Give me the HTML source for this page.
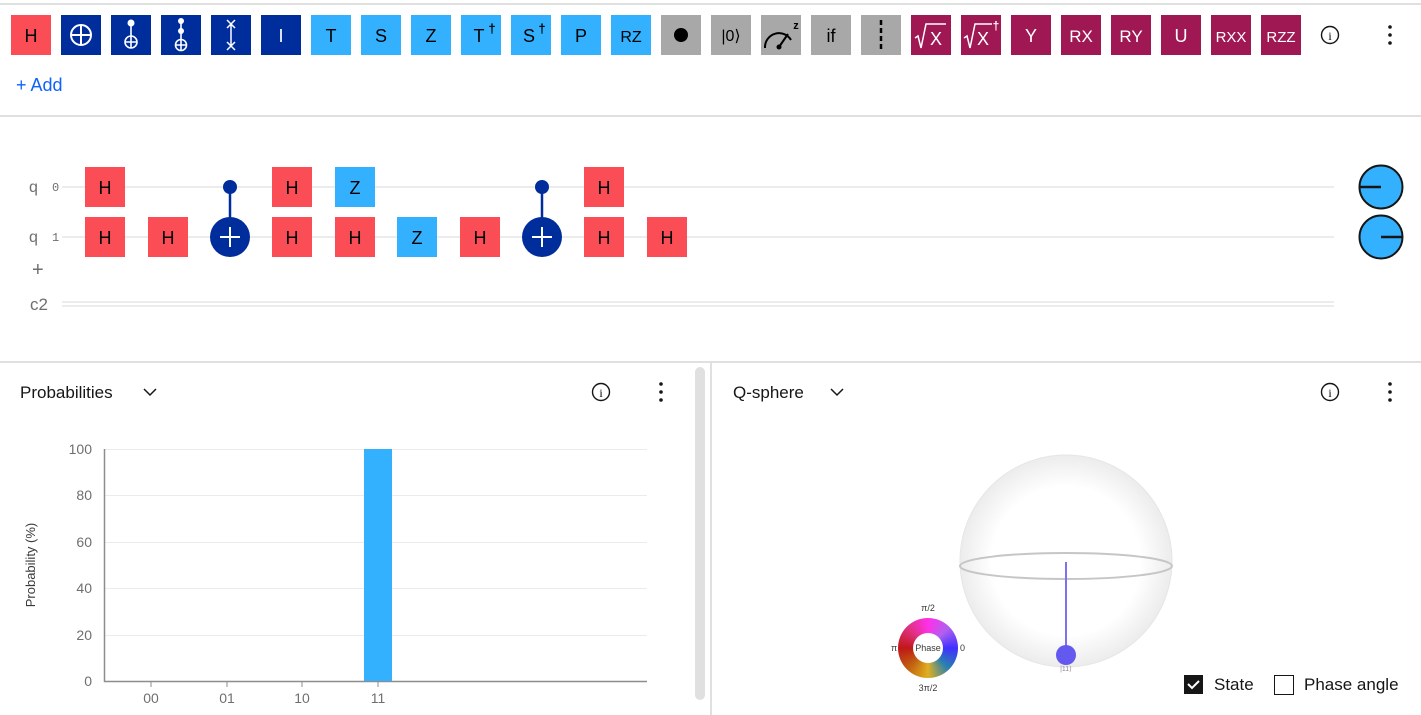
<!DOCTYPE html>
<html><head><meta charset="utf-8"><style>
html,body{margin:0;padding:0;background:#fff;width:1421px;height:715px;overflow:hidden;position:relative}
svg{display:block;font-family:"Liberation Sans",sans-serif}
.wheel{position:absolute;left:898px;top:618px;width:60px;height:60px;border-radius:50%;
background:conic-gradient(#ff30e8 0deg,#b060f0 45deg,#4030ff 90deg,#2a80b0 135deg,#e0b020 180deg,#c06010 225deg,#c01818 270deg,#e03080 315deg,#ff30e8 360deg)}
.wheel:after{content:"";position:absolute;left:15px;top:15px;width:30px;height:30px;border-radius:50%;background:#fff}
.wl{position:absolute;font-family:"Liberation Sans",sans-serif;font-size:9px;color:#393939}
</style></head><body>
<svg width="1421" height="715" viewBox="0 0 1421 715" xmlns="http://www.w3.org/2000/svg">
<rect x="0" y="3" width="1421" height="2" fill="#e0e0e0"/>
<g font-size="18" text-anchor="middle">
<rect x="11" y="15" width="40" height="40" fill="#fa4d56"/><text x="31" y="42" fill="#000">H</text>
<rect x="61" y="15" width="40" height="40" fill="#002d9c"/>
<g stroke="#fff" stroke-width="2" fill="none"><circle cx="81" cy="35" r="10"/><path d="M71 35h20M81 25v20"/></g>
<rect x="111" y="15" width="40" height="40" fill="#002d9c"/>
<g stroke="#fff" stroke-width="1.6" fill="none"><circle cx="131" cy="42" r="6"/><path d="M125 42h12M131 36v12M131 24v12"/></g><circle cx="131" cy="23" r="3.5" fill="#fff"/>
<rect x="161" y="15" width="40" height="40" fill="#002d9c"/>
<g stroke="#fff" stroke-width="1.6" fill="none"><circle cx="181" cy="45" r="5.5"/><path d="M175.5 45h11M181 39.5v11M181 21v18"/></g><circle cx="181" cy="21" r="3" fill="#fff"/><circle cx="181" cy="31" r="3" fill="#fff"/>
<rect x="211" y="15" width="40" height="40" fill="#002d9c"/>
<g stroke="#fff" stroke-width="1.5"><path d="M227 20l8 8M235 20l-8 8M227 42l8 8M235 42l-8 8M231 24v22"/></g>
<rect x="261" y="15" width="40" height="40" fill="#002d9c"/><text x="281" y="42" fill="#fff">I</text>
<rect x="311" y="15" width="40" height="40" fill="#33b1ff"/><text x="331" y="42">T</text>
<rect x="361" y="15" width="40" height="40" fill="#33b1ff"/><text x="381" y="42">S</text>
<rect x="411" y="15" width="40" height="40" fill="#33b1ff"/><text x="431" y="42">Z</text>
<rect x="461" y="15" width="40" height="40" fill="#33b1ff"/><text x="479" y="42">T</text><text x="492" y="33" font-size="13" font-weight="bold">†</text>
<rect x="511" y="15" width="40" height="40" fill="#33b1ff"/><text x="529" y="42">S</text><text x="542" y="33" font-size="13" font-weight="bold">†</text>
<rect x="561" y="15" width="40" height="40" fill="#33b1ff"/><text x="581" y="42">P</text>
<rect x="611" y="15" width="40" height="40" fill="#33b1ff"/><text x="631" y="42" font-size="16">RZ</text>
<rect x="661" y="15" width="40" height="40" fill="#a8a8a8"/><circle cx="681" cy="35" r="7" fill="#000"/>
<rect x="711" y="15" width="40" height="40" fill="#a8a8a8"/><text x="731" y="41" font-size="16">|0⟩</text>
<rect x="761" y="15" width="40" height="40" fill="#a8a8a8"/>
<g stroke="#000" stroke-width="2" fill="none"><path d="M765 48a14 14 0 0 1 26-8"/><path d="M779 47l9-13"/></g><circle cx="779" cy="47" r="2.5"/><text x="796" y="29" font-size="11" font-weight="bold">z</text>
<rect x="811" y="15" width="40" height="40" fill="#a8a8a8"/><text x="831" y="42">if</text>
<rect x="861" y="15" width="40" height="40" fill="#a8a8a8"/><path d="M881 20v30" stroke="#000" stroke-width="2.5" stroke-dasharray="5 3"/>
<rect x="911" y="15" width="40" height="40" fill="#9f1853"/>
<path d="M915 38l3-2 3 12 5-24h20" stroke="#fff" stroke-width="1.5" fill="none"/><text x="936" y="45" fill="#fff">X</text>
<rect x="961" y="15" width="40" height="40" fill="#9f1853"/>
<path d="M964 38l3-2 3 12 5-24h17" stroke="#fff" stroke-width="1.5" fill="none"/><text x="983" y="45" fill="#fff">X</text><text x="996" y="30" font-size="12" fill="#fff" font-weight="bold">†</text>
<rect x="1011" y="15" width="40" height="40" fill="#9f1853"/><text x="1031" y="42" fill="#fff">Y</text>
<rect x="1061" y="15" width="40" height="40" fill="#9f1853"/><text x="1081" y="42" fill="#fff" font-size="17">RX</text>
<rect x="1111" y="15" width="40" height="40" fill="#9f1853"/><text x="1131" y="42" fill="#fff" font-size="17">RY</text>
<rect x="1161" y="15" width="40" height="40" fill="#9f1853"/><text x="1181" y="42" fill="#fff">U</text>
<rect x="1211" y="15" width="40" height="40" fill="#9f1853"/><text x="1231" y="42" fill="#fff" font-size="15">RXX</text>
<rect x="1261" y="15" width="40" height="40" fill="#9f1853"/><text x="1281" y="42" fill="#fff" font-size="15">RZZ</text>
</g>
<g id="info"><circle cx="1330" cy="35" r="8.5" fill="none" stroke="#161616" stroke-width="1.4"/><text x="1330" y="40" font-size="12" text-anchor="middle" font-family="Liberation Serif">i</text></g>
<g fill="#161616"><circle cx="1390" cy="27" r="1.8"/><circle cx="1390" cy="35" r="1.8"/><circle cx="1390" cy="43" r="1.8"/></g>
<text x="16" y="91" font-size="18" fill="#0f62fe">+ Add</text>
<rect x="0" y="115" width="1421" height="2" fill="#e0e0e0"/>
<g font-size="16" fill="#6f6f6f"><text x="29" y="192">q</text><text x="52" y="191" font-size="12" font-family="Liberation Mono">0</text>
<text x="29" y="242">q</text><text x="52" y="241" font-size="12" font-family="Liberation Mono">1</text>
<text x="32" y="276" font-size="20">+</text><text x="30" y="310" font-size="17">c2</text></g>
<rect x="62" y="186" width="1272" height="2" fill="#ececec"/>
<rect x="62" y="236" width="1272" height="2" fill="#ececec"/>
<rect x="62" y="301" width="1272" height="2" fill="#ececec"/>
<rect x="62" y="305" width="1272" height="2" fill="#ececec"/>
<g font-size="18" text-anchor="middle">
<rect x="85" y="167" width="40" height="40" fill="#fa4d56"/><text x="105" y="194">H</text>
<rect x="272" y="167" width="40" height="40" fill="#fa4d56"/><text x="292" y="194">H</text>
<rect x="335" y="167" width="40" height="40" fill="#33b1ff"/><text x="355" y="194">Z</text>
<rect x="584" y="167" width="40" height="40" fill="#fa4d56"/><text x="604" y="194">H</text>
<rect x="85" y="217" width="40" height="40" fill="#fa4d56"/><text x="105" y="244">H</text>
<rect x="148" y="217" width="40" height="40" fill="#fa4d56"/><text x="168" y="244">H</text>
<rect x="272" y="217" width="40" height="40" fill="#fa4d56"/><text x="292" y="244">H</text>
<rect x="335" y="217" width="40" height="40" fill="#fa4d56"/><text x="355" y="244">H</text>
<rect x="397" y="217" width="40" height="40" fill="#33b1ff"/><text x="417" y="244">Z</text>
<rect x="460" y="217" width="40" height="40" fill="#fa4d56"/><text x="480" y="244">H</text>
<rect x="584" y="217" width="40" height="40" fill="#fa4d56"/><text x="604" y="244">H</text>
<rect x="647" y="217" width="40" height="40" fill="#fa4d56"/><text x="667" y="244">H</text>
</g>
<g><path d="M230 187v40" stroke="#002d9c" stroke-width="2.5"/><circle cx="230" cy="187" r="7" fill="#002d9c"/><circle cx="230" cy="237" r="20" fill="#002d9c"/><path d="M220 237h20M230 227v20" stroke="#fff" stroke-width="2"/></g>
<g><path d="M542 187v40" stroke="#002d9c" stroke-width="2.5"/><circle cx="542" cy="187" r="7" fill="#002d9c"/><circle cx="542" cy="237" r="20" fill="#002d9c"/><path d="M532 237h20M542 227v20" stroke="#fff" stroke-width="2"/></g>
<g stroke="#161616" stroke-width="2"><circle cx="1381" cy="187" r="21.5" fill="#33b1ff"/><path d="M1360 187h21" stroke-width="2.5"/><circle cx="1381" cy="237" r="21.5" fill="#33b1ff"/><path d="M1381 237h21" stroke-width="2.5"/></g>
<rect x="0" y="361" width="1421" height="2" fill="#e0e0e0"/>
<rect x="710" y="363" width="2" height="352" fill="#e0e0e0"/>
<rect x="695" y="367" width="10" height="333" rx="5" fill="#e0e0e0"/>
<text x="20" y="398" font-size="17" fill="#161616">Probabilities</text>
<path d="M144 389l6 6 6-6" stroke="#161616" stroke-width="1.5" fill="none"/>
<use href="#info" x="-729" y="357"/>
<g fill="#161616"><circle cx="661" cy="384" r="1.8"/><circle cx="661" cy="392" r="1.8"/><circle cx="661" cy="400" r="1.8"/></g>
<g stroke="#ebebeb"><path d="M104 449.5H647M104 495.5H647M104 542.5H647M104 588.5H647M104 635.5H647"/></g>
<path d="M104.5 449v232.5H647" stroke="#8d8d8d" stroke-width="1.5" fill="none"/>
<rect x="364" y="449" width="28" height="232" fill="#33b1ff"/>
<g font-size="14" fill="#6f6f6f" text-anchor="end"><text x="92" y="454">100</text><text x="92" y="500">80</text><text x="92" y="547">60</text><text x="92" y="593">40</text><text x="92" y="640">20</text><text x="92" y="686">0</text></g>
<g stroke="#8d8d8d"><path d="M151 682v5M227 682v5M302 682v5M378 682v5"/></g>
<g font-size="14" fill="#6f6f6f" text-anchor="middle"><text x="151" y="703">00</text><text x="227" y="703">01</text><text x="302" y="703">10</text><text x="378" y="703">11</text></g>
<text transform="translate(35,565) rotate(-90)" font-size="13" fill="#393939" text-anchor="middle">Probability (%)</text>
<text x="733" y="398" font-size="17" fill="#161616">Q-sphere</text>
<path d="M831 389l6 6 6-6" stroke="#161616" stroke-width="1.5" fill="none"/>
<use href="#info" x="0" y="357"/>
<g fill="#161616"><circle cx="1390" cy="384" r="1.8"/><circle cx="1390" cy="392" r="1.8"/><circle cx="1390" cy="400" r="1.8"/></g>
<defs><radialGradient id="sg" cx="0.5" cy="0.5" r="0.5"><stop offset="0.7" stop-color="#fff"/><stop offset="1" stop-color="#ececec"/></radialGradient></defs>
<circle cx="1066" cy="561" r="106" fill="url(#sg)" stroke="#e6e6e6"/>
<ellipse cx="1066" cy="566" rx="106" ry="13" fill="none" stroke="#c6c6c6" stroke-width="2"/>
<path d="M1066 562v93" stroke="#7c72f0" stroke-width="2"/>
<circle cx="1066" cy="655" r="10" fill="#6459ef"/>
<text x="1066" y="671" font-size="7" fill="#8d8d8d" text-anchor="middle">|11⟩</text>
<rect x="1184" y="675" width="19" height="19" fill="#161616"/><path d="M1188 684l4 4 7-7" stroke="#fff" stroke-width="2" fill="none"/>
<text x="1214" y="690" font-size="17" fill="#161616">State</text>
<rect x="1274.5" y="675.5" width="19" height="19" fill="none" stroke="#161616"/>
<text x="1304" y="690" font-size="17" fill="#161616">Phase angle</text>
</svg>
<div class="wheel"></div>
<div class="wl" style="left:913px;top:643px;width:30px;text-align:center">Phase</div>
<div class="wl" style="left:918px;top:603px;width:20px;text-align:center">π/2</div>
<div class="wl" style="left:891px;top:643px">π</div>
<div class="wl" style="left:960px;top:643px">0</div>
<div class="wl" style="left:913px;top:683px;width:30px;text-align:center">3π/2</div>
</body></html>
